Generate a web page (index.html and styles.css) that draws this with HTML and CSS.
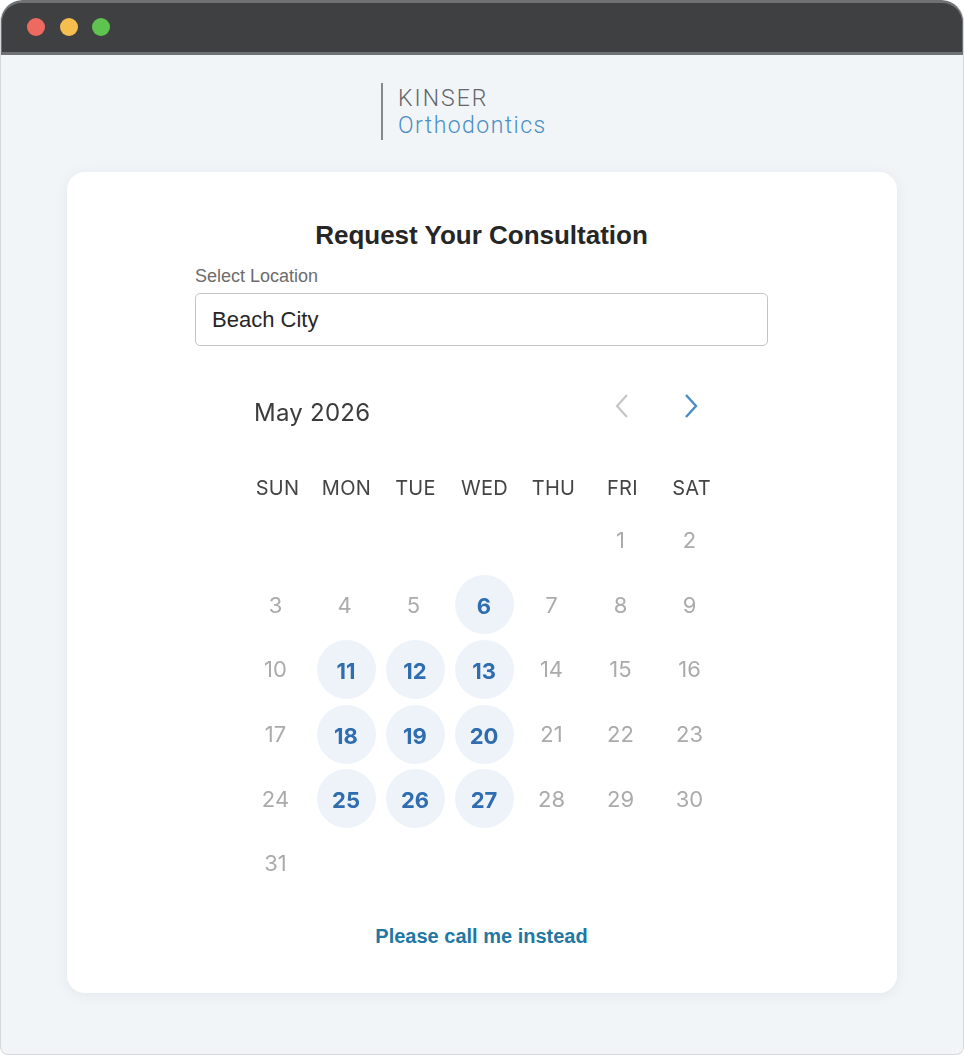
FILE: index.html
```html
<!DOCTYPE html>
<html lang="en">
<head>
<meta charset="utf-8">
<title>Request Your Consultation</title>
<link rel="stylesheet" href="styles.css">
</head>
<body>
<div class="window">
  <header class="titlebar">
    <span class="dot red"></span><span class="dot yellow"></span><span class="dot green"></span>
  </header>
  <main class="content">
    <div class="logo">
      <div class="logo-top">KINSER</div>
      <div class="logo-bottom">Orthodontics</div>
    </div>
    <section class="card">
      <h1 class="title">Request Your Consultation</h1>
      <div class="field">
        <div class="label">Select Location</div>
        <div class="select">Beach City</div>
      </div>
      <div class="calendar">
        <div class="cal-head">
          <div class="month">May 2026</div>
          <div class="nav">
            <svg class="chev" width="16" height="26" viewBox="0 0 16 26"><path d="M13 2 L3 13 L13 24" fill="none" stroke="#c4c6c8" stroke-width="2.2"/></svg>
            <svg class="chev" width="16" height="26" viewBox="0 0 16 26"><path d="M3 2 L13 13 L3 24" fill="none" stroke="#4a8cc4" stroke-width="2.4"/></svg>
          </div>
        </div>
        <div class="grid weekdays">
          <div>SUN</div><div>MON</div><div>TUE</div><div>WED</div><div>THU</div><div>FRI</div><div>SAT</div>
        </div>
        <div class="grid days">
          <div></div><div></div><div></div><div></div><div></div><div class="d">1</div><div class="d">2</div>
          <div class="d">3</div><div class="d">4</div><div class="d">5</div><div class="d on"><span>6</span></div><div class="d">7</div><div class="d">8</div><div class="d">9</div>
          <div class="d">10</div><div class="d on"><span>11</span></div><div class="d on"><span>12</span></div><div class="d on"><span>13</span></div><div class="d">14</div><div class="d">15</div><div class="d">16</div>
          <div class="d">17</div><div class="d on"><span>18</span></div><div class="d on"><span>19</span></div><div class="d on"><span>20</span></div><div class="d">21</div><div class="d">22</div><div class="d">23</div>
          <div class="d">24</div><div class="d on"><span>25</span></div><div class="d on"><span>26</span></div><div class="d on"><span>27</span></div><div class="d">28</div><div class="d">29</div><div class="d">30</div>
          <div class="d">31</div>
        </div>
      </div>
      <a class="call" href="#">Please call me instead</a>
    </section>
  </main>
</div>
</body>
</html>
```
FILE: styles.css
```css
* { box-sizing: border-box; }
html, body { margin: 0; padding: 0; }
body { width: 964px; height: 1055px; background: #fff; font-family: "Liberation Sans", Arial, sans-serif; overflow: hidden; }
.window { width: 964px; height: 1055px; background: #f1f5f8; border-radius: 22px 22px 8px 8px; border: 1px solid #d5d9dc; border-top: 0; overflow: hidden; display: flex; flex-direction: column; }
.titlebar { height: 55px; flex: none; margin: 0 -1px; background: #3e4042; border: 2px solid #6f7272; border-top-width: 3px; border-bottom-width: 3px; border-radius: 22px 22px 0 0; display: flex; align-items: center; gap: 14.5px; padding: 0 0 2px 25px; }
.dot { width: 18px; height: 18px; border-radius: 50%; }
.red { background: #ee6a60; }
.yellow { background: #f6bd4f; }
.green { background: #5ec44f; }
.content { flex: 1; display: flex; flex-direction: column; padding: 28px 66px 0; }
.logo { margin-left: 314px; height: 57px; border-left: 2px solid #85888a; padding: 2px 0 0 15px; font-family: Roboto, "Liberation Sans", sans-serif; font-weight: 300; font-size: 23px; line-height: 27px; }
.logo-top { color: #62666a; letter-spacing: 2px; }
.logo-bottom { color: #4a8fc4; letter-spacing: 1.45px; }
.card { margin-top: 32px; height: 821px; background: #fff; border-radius: 18px; box-shadow: 0 2px 14px rgba(40, 60, 80, .07); padding: 46px 129px 0 128px; display: flex; flex-direction: column; align-items: stretch; }
.title { margin: 0; font-size: 26px; line-height: 34px; font-weight: 700; color: #262626; text-align: center; }
.field { margin-top: 14px; }
.label { font-size: 18px; line-height: 20px; color: #6c6c6c; }
.select { margin-top: 7px; height: 53px; border: 1px solid #c4c4c4; border-radius: 5px; padding: 0 16px; font-size: 22px; line-height: 51px; color: #262626; }
.calendar { width: 483px; margin: 0 0 0 47px; filter: blur(.7px); font-family: Inter, "Liberation Sans", sans-serif; }
.cal-head { height: 129px; display: flex; justify-content: space-between; padding: 51px 26px 0 12px; }
.month { font-size: 24px; line-height: 32px; letter-spacing: .25px; color: #3c3c3c; }
.nav { display: flex; gap: 53px; margin-top: -4px; height: 26px; }
.grid { display: grid; grid-template-columns: repeat(7, 69px); text-align: center; }
.weekdays { height: 32px; padding-left: 1px; font-size: 20px; line-height: 27px; letter-spacing: .3px; color: #444; }
.days { grid-auto-rows: 64.6px; margin-top: 1px; }
.d { display: flex; align-items: center; justify-content: center; font-size: 22px; color: #ababab; padding-right: 2px; }
.on { padding: 0 0 0 1px; }
.on span { width: 59px; height: 59px; border-radius: 50%; background: #edf3f9; display: flex; align-items: center; justify-content: center; padding-top: 3px; color: #2f6db0; font-weight: 700; }
.call { margin-top: 26px; align-self: center; font-size: 20px; line-height: 28px; font-weight: 700; color: #1f78a4; text-decoration: none; }
```
